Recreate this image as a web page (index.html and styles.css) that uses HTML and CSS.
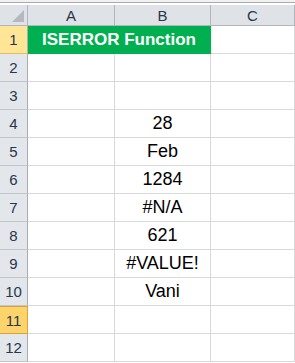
FILE: index.html
```html
<!DOCTYPE html>
<html lang="en">
<head>
  <meta charset="UTF-8"/>
  <title>ISERROR Function</title>
  <link rel="stylesheet" href="styles.css">
</head>
<body>

  <!-- Toolbar edge above the sheet -->
  <div class="strip"></div>

  <div class="sheet">
    <!-- Column headers -->
    <div class="corner"><span class="tri"></span></div>
    <div class="colhead">A</div>
    <div class="colhead">B</div>
    <div class="colhead">C</div>

    <div class="rowhead sel-light">1</div>
    <div class="cell title">ISERROR Function</div>
    <div class="cell"></div>

    <div class="rowhead">2</div>
    <div class="cell"></div><div class="cell"></div><div class="cell"></div>

    <div class="rowhead">3</div>
    <div class="cell"></div><div class="cell"></div><div class="cell"></div>

    <div class="rowhead">4</div>
    <div class="cell"></div><div class="cell val">28</div><div class="cell"></div>

    <div class="rowhead">5</div>
    <div class="cell"></div><div class="cell val">Feb</div><div class="cell"></div>

    <div class="rowhead">6</div>
    <div class="cell"></div><div class="cell val">1284</div><div class="cell"></div>

    <div class="rowhead">7</div>
    <div class="cell"></div><div class="cell val">#N/A</div><div class="cell"></div>

    <div class="rowhead">8</div>
    <div class="cell"></div><div class="cell val">621</div><div class="cell"></div>

    <div class="rowhead">9</div>
    <div class="cell"></div><div class="cell val">#VALUE!</div><div class="cell"></div>

    <div class="rowhead">10</div>
    <div class="cell"></div><div class="cell val">Vani</div><div class="cell"></div>

    <div class="rowhead sel">11</div>
    <div class="cell"></div><div class="cell"></div><div class="cell"></div>

    <div class="rowhead">12</div>
    <div class="cell"></div><div class="cell"></div><div class="cell"></div>
  </div>

</body>
</html>
```

FILE: styles.css
```css
body {
  margin: 0;
  background: #fff;
  font-family: 'Liberation Sans', Arial, sans-serif;
  color: #000;
}

.strip {
  height: 2px;
  background: #f2f2f2;
  border-bottom: 1px solid #a8acb2;
  margin-bottom: 2px;
}

.sheet {
  display: grid;
  grid-template-columns: 28px 87px 96px 1fr;
  grid-template-rows: 21px repeat(12, 28px);
}

.sheet > div {
  box-sizing: border-box;
}

.corner {
  position: relative;
  background: #dfe3e8;
  border-right: 1px solid #b1b6bd;
  border-bottom: 1px solid #b1b6bd;
}

.corner .tri {
  position: absolute;
  right: 3px;
  bottom: 3px;
  width: 0;
  height: 0;
  border-left: 12px solid transparent;
  border-bottom: 12px solid #b4b9c0;
}

.colhead {
  background: #dfe3e8;
  border-right: 1px solid #b1b6bd;
  border-bottom: 1px solid #b1b6bd;
  display: flex;
  align-items: center;
  justify-content: center;
  font-size: 15px;
  color: #27364a;
}

.rowhead {
  background: #e3e6ea;
  border-right: 1px solid #a9aeb5;
  border-bottom: 1px solid #c2c6cc;
  display: flex;
  align-items: center;
  justify-content: center;
  font-size: 15px;
  color: #27364a;
}

.rowhead.sel-light {
  background: #ffe596;
  border-bottom-color: #e7bc63;
}

.rowhead.sel {
  background: #fdd46b;
  border-right-color: #e0a03c;
  border-bottom: 1px solid #e0a03c;
  border-top: 1px solid #e0a03c;
}

.cell {
  border-right: 1px solid #d9d9d9;
  border-bottom: 1px solid #d9d9d9;
  display: flex;
  align-items: center;
  justify-content: center;
  font-size: 18px;
}

.title {
  grid-column: span 2;
  background: #00b050;
  color: #fff;
  font-weight: bold;
  font-size: 17px;
  border-right-color: #00b050;
  border-bottom-color: #00b050;
}
```
